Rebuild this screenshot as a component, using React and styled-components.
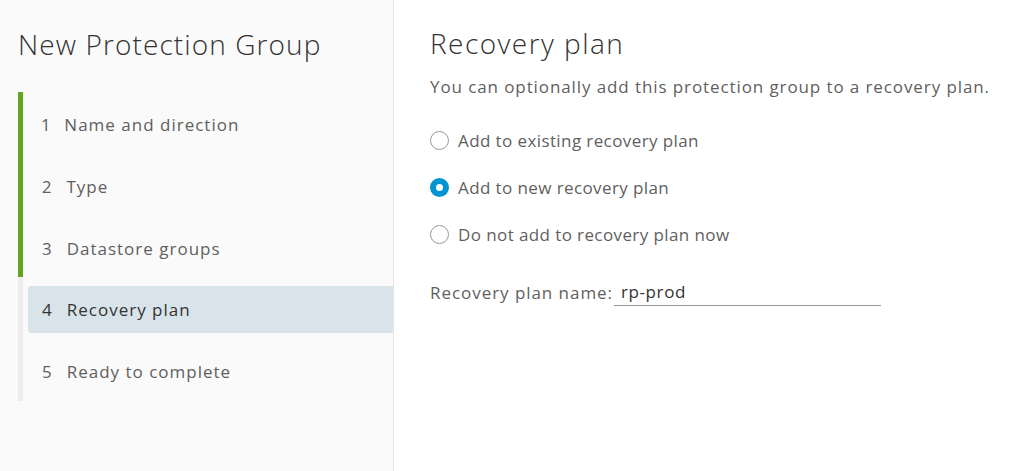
import React, { useState } from 'react';
import styled, { createGlobalStyle } from 'styled-components';

const steps = [
  { id: 1, title: 'Name and direction' },
  { id: 2, title: 'Type' },
  { id: 3, title: 'Datastore groups' },
  { id: 4, title: 'Recovery plan' },
  { id: 5, title: 'Ready to complete' },
];

const options = [
  { id: 'existing', label: 'Add to existing recovery plan' },
  { id: 'new', label: 'Add to new recovery plan' },
  { id: 'none', label: 'Do not add to recovery plan now' },
];

const GlobalStyle = createGlobalStyle`
  html, body {
    margin: 0;
    padding: 0;
    background: #fff;
  }
  body {
    font-family: 'Open Sans', 'Lato', sans-serif;
  }
`;

const App = () => {
  const [current] = useState(4);
  const [choice, setChoice] = useState('new');
  const [name, setName] = useState('rp-prod');

  return (
    <Wrapper>
      <GlobalStyle />
      <Sidebar>
        <WizardTitle>New Protection Group</WizardTitle>
        <StepList>
          <Track>
            <TrackDone style={{ height: `${((current - 1) / steps.length) * 100}%` }} />
          </Track>
          {steps.map((step) => (
            <Step key={step.id} active={step.id === current}>
              <StepNum>{step.id}</StepNum>
              {step.title}
            </Step>
          ))}
        </StepList>
      </Sidebar>
      <Content>
        <Heading>Recovery plan</Heading>
        <Intro>You can optionally add this protection group to a recovery plan.</Intro>
        <RadioGroup>
          {options.map((opt) => (
            <RadioRow key={opt.id} onClick={() => setChoice(opt.id)}>
              <Radio checked={choice === opt.id} />
              {opt.label}
            </RadioRow>
          ))}
        </RadioGroup>
        <Field>
          <FieldLabel>Recovery plan name:</FieldLabel>
          <TextInput value={name} onChange={(e) => setName(e.target.value)} />
        </Field>
      </Content>
    </Wrapper>
  );
};

const Wrapper = styled.div`
  display: flex;
  width: 1024px;
  height: 471px;
  overflow: hidden;
`;

const Sidebar = styled.aside`
  width: 394px;
  flex-shrink: 0;
  background: #fafafa;
  border-right: 1px solid #e6e6e6;
  padding: 28px 0 0 18px;
  box-sizing: border-box;
`;

const WizardTitle = styled.h1`
  margin: 0;
  font-size: 28px;
  font-weight: 300;
  color: #333;
  line-height: 32px;
  letter-spacing: 1.1px;
`;

const StepList = styled.ol`
  position: relative;
  list-style: none;
  margin: 32px 0 0;
  padding: 9px 0 6px 10px;
  display: flex;
  flex-direction: column;
  gap: 14.75px;
`;

const Track = styled.div`
  position: absolute;
  left: 0;
  top: 0;
  bottom: 0;
  width: 5px;
  background: #eeeeee;
`;

const TrackDone = styled.div`
  width: 100%;
  background: #62a420;
`;

const Step = styled.li`
  height: 47px;
  display: flex;
  align-items: center;
  padding-left: 14px;
  border-radius: 3px 0 0 3px;
  font-size: 17px;
  color: ${(p) => (p.active ? '#333' : '#5f5f5f')};
  background: ${(p) => (p.active ? '#d9e4ea' : 'transparent')};
  letter-spacing: 1px;
`;

const StepNum = styled.span`
  margin-right: 14px;
  font-variant-numeric: proportional-nums;
`;

const Content = styled.main`
  flex: 1;
  padding: 27px 0 0 36px;
`;

const Heading = styled.h2`
  margin: 0;
  font-size: 28px;
  font-weight: 300;
  color: #333;
  line-height: 32px;
  letter-spacing: 1.45px;
`;

const Intro = styled.p`
  margin: 16px 0 0;
  font-size: 17px;
  line-height: 24px;
  color: #5f5f5f;
  letter-spacing: 0.9px;
`;

const RadioGroup = styled.div`
  margin-top: 29px;
  display: flex;
  flex-direction: column;
  gap: 23px;
`;

const RadioRow = styled.label`
  display: flex;
  align-items: center;
  gap: 9px;
  height: 24px;
  font-size: 17px;
  color: #5f5f5f;
  letter-spacing: 0.4px;
  cursor: pointer;
`;

const Radio = styled.span`
  width: 19px;
  height: 19px;
  box-sizing: border-box;
  border-radius: 50%;
  border: ${(p) => (p.checked ? '6.5px solid #0094d2' : '1.5px solid #9a9a9a')};
  background: #fff;
  flex-shrink: 0;
`;

const Field = styled.div`
  margin-top: 32px;
  display: flex;
  align-items: center;
  gap: 1px;
`;

const FieldLabel = styled.span`
  font-size: 17px;
  color: #5f5f5f;
  letter-spacing: 0.95px;
`;

const TextInput = styled.input`
  width: 267px;
  height: 28px;
  box-sizing: border-box;
  border: none;
  border-bottom: 1px solid #9a9a9a;
  background: transparent;
  padding: 0 7px;
  font-family: inherit;
  font-size: 17px;
  color: #333;
  letter-spacing: 0.6px;
  outline: none;
`;

export default App;
